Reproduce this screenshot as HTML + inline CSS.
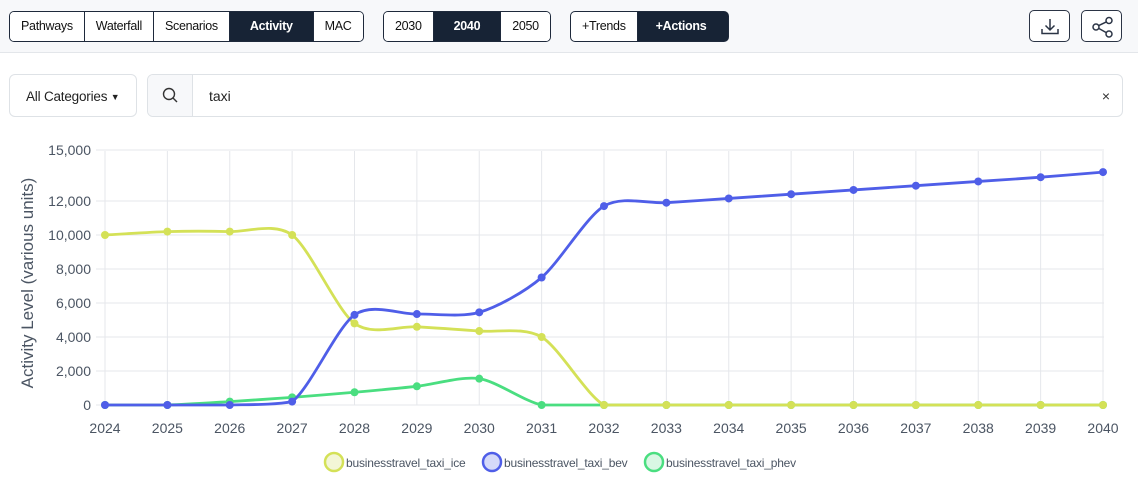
<!DOCTYPE html>
<html><head><meta charset="utf-8">
<style>
*{box-sizing:border-box;margin:0;padding:0}
body{width:1138px;height:492px;background:#fff;font-family:"Liberation Sans",sans-serif;position:relative;overflow:hidden;color:#212529}
.top{position:absolute;left:0;top:0;width:1138px;height:53px;background:#f7f8fa;border-bottom:1px solid #e3e6ea}
.grp{position:absolute;top:11px;height:31px;display:flex;border:1px solid #1e293b;border-radius:5px;overflow:hidden}
.grp div{height:29px;line-height:29px;font-size:12.5px;letter-spacing:-0.3px;padding:0 11px;border-left:1px solid #1e293b;background:#fff;color:#111}
.grp div:first-child{border-left:none}
.grp div.on{background:#172335;color:#fff;font-weight:bold}
.ib{position:absolute;top:10px;width:41px;height:32px;border:1px solid #2b3445;border-radius:5px;background:#fff}
.sel{position:absolute;left:9px;top:74px;width:128px;height:43px;border:1px solid #dee2e6;border-radius:6px;font-size:13.5px;letter-spacing:-0.2px;line-height:43px;padding-left:16px;color:#222}
.srch{position:absolute;left:147px;top:74px;width:976px;height:43px;border:1px solid #dee2e6;border-radius:6px;overflow:hidden}
.srch .ic{position:absolute;left:0;top:0;width:45px;height:41px;background:#f7f8fa;border-right:1px solid #dee2e6}
.srch .t{position:absolute;left:61px;top:0;line-height:43px;font-size:14px;color:#222}
.srch .x{position:absolute;right:12px;top:0;line-height:43px;font-size:14px;color:#333}
</style></head><body>
<div class="top">
 <div class="grp" style="left:9px"><div>Pathways</div><div>Waterfall</div><div>Scenarios</div><div class="on" style="padding:0 20px">Activity</div><div>MAC</div></div>
 <div class="grp" style="left:383px"><div>2030</div><div class="on" style="padding:0 20px">2040</div><div>2050</div></div>
 <div class="grp" style="left:570px;background:#172335"><div>+Trends</div><div class="on" style="padding:0 22px 0 18px">+Actions</div></div>
 <div class="ib" style="left:1029px"><svg width="41" height="32" viewBox="0 0 41 32"><path d="M20 8v11M15.5 14.5 20 19l4.5-4.5M12 18v4.5h16V18" fill="none" stroke="#2b3445" stroke-width="1.5"/></svg></div>
 <div class="ib" style="left:1081px"><svg width="41" height="32" viewBox="0 0 41 32"><g fill="none" stroke="#2b3445" stroke-width="1.5"><circle cx="14" cy="16" r="3"/><circle cx="27" cy="9.5" r="3"/><circle cx="27" cy="23" r="3"/><path d="M16.7 14.6 24.3 10.9M16.7 17.4 24.3 21.6"/></g></svg></div>
</div>
<div class="sel">All Categories <span style="font-size:9px;vertical-align:1px">▼</span></div>
<div class="srch"><div class="ic"><svg width="45" height="41"><circle cx="21" cy="19" r="5.5" fill="none" stroke="#333" stroke-width="1.4"/><path d="M25 23l4 4" stroke="#333" stroke-width="1.4"/></svg></div><div class="t">taxi</div><div class="x">×</div></div>
<svg id="ch" style="position:absolute;left:0;top:0" width="1138" height="492"></svg>
<script>
const s=document.getElementById('ch');let h='';
const X=i=>105+i*62.375, Y=v=>405-v*0.017;
for(let i=0;i<17;i++)h+=`<line x1="${X(i)}" x2="${X(i)}" y1="151" y2="405" stroke="#e5e7eb"/>`;
[0,2000,4000,6000,8000,10000,12000,15000].forEach(v=>{h+=`<line x1="96" x2="1104" y1="${Y(v)}" y2="${Y(v)}" stroke="#e5e7eb"/><text x="91" y="${Y(v)+5}" text-anchor="end" font-size="14" fill="#4b5563">${v.toLocaleString('en-US')}</text>`});
for(let i=0;i<17;i++)h+=`<text x="${X(i)}" y="433" text-anchor="middle" font-size="14" fill="#4b5563">${2024+i}</text>`;
h+=`<text transform="translate(33,283) rotate(-90)" text-anchor="middle" font-size="17" fill="#4b5563">Activity Level (various units)</text>`;
const z=n=>Array(n).fill(0);
const S=[
 ['#d4e157',[10000,10200,10200,10000,4800,4600,4350,4000,...z(9)]],
 ['#4f5ee8',[0,0,0,200,5300,5350,5450,7500,11700,11900,12150,12400,12650,12900,13150,13400,13700]],
 ['#4ade80',[0,0,200,450,750,1100,1550,0,...z(9)]]];
const cl=y=>Math.min(405,y);
[S[2],S[0],S[1]].forEach(([c,d])=>{
 const p=d.map((v,i)=>[X(i),Y(v)]);let path=`M${p[0]}`;
 for(let i=0;i<p.length-1;i++){const a=p[i-1]||p[i],b=p[i],e=p[i+1],f=p[i+2]||e,t=0.14;
  path+=`C${b[0]+(e[0]-a[0])*t},${cl(b[1]+(e[1]-a[1])*t)} ${e[0]-(f[0]-b[0])*t},${cl(e[1]-(f[1]-b[1])*t)} ${e[0]},${e[1]}`}
 h+=`<path d="${path}" fill="none" stroke="${c}" stroke-width="2.8"/>`;
 p.forEach(q=>h+=`<circle cx="${q[0]}" cy="${q[1]}" r="4" fill="${c}"/>`);
});
[[334,'#d4e157','#f3f6d6','businesstravel_taxi_ice'],[492,'#4f5ee8','#d5d9f9','businesstravel_taxi_bev'],[654,'#4ade80','#d9f7e4','businesstravel_taxi_phev']].forEach(([x,c,f,t])=>{
 h+=`<circle cx="${x}" cy="462" r="9" fill="${f}" stroke="${c}" stroke-width="2.5"/><text x="${x+12}" y="467" font-size="12" letter-spacing="-0.2" fill="#4b5563">${t}</text>`});
s.innerHTML=h;
</script>
</body></html>
